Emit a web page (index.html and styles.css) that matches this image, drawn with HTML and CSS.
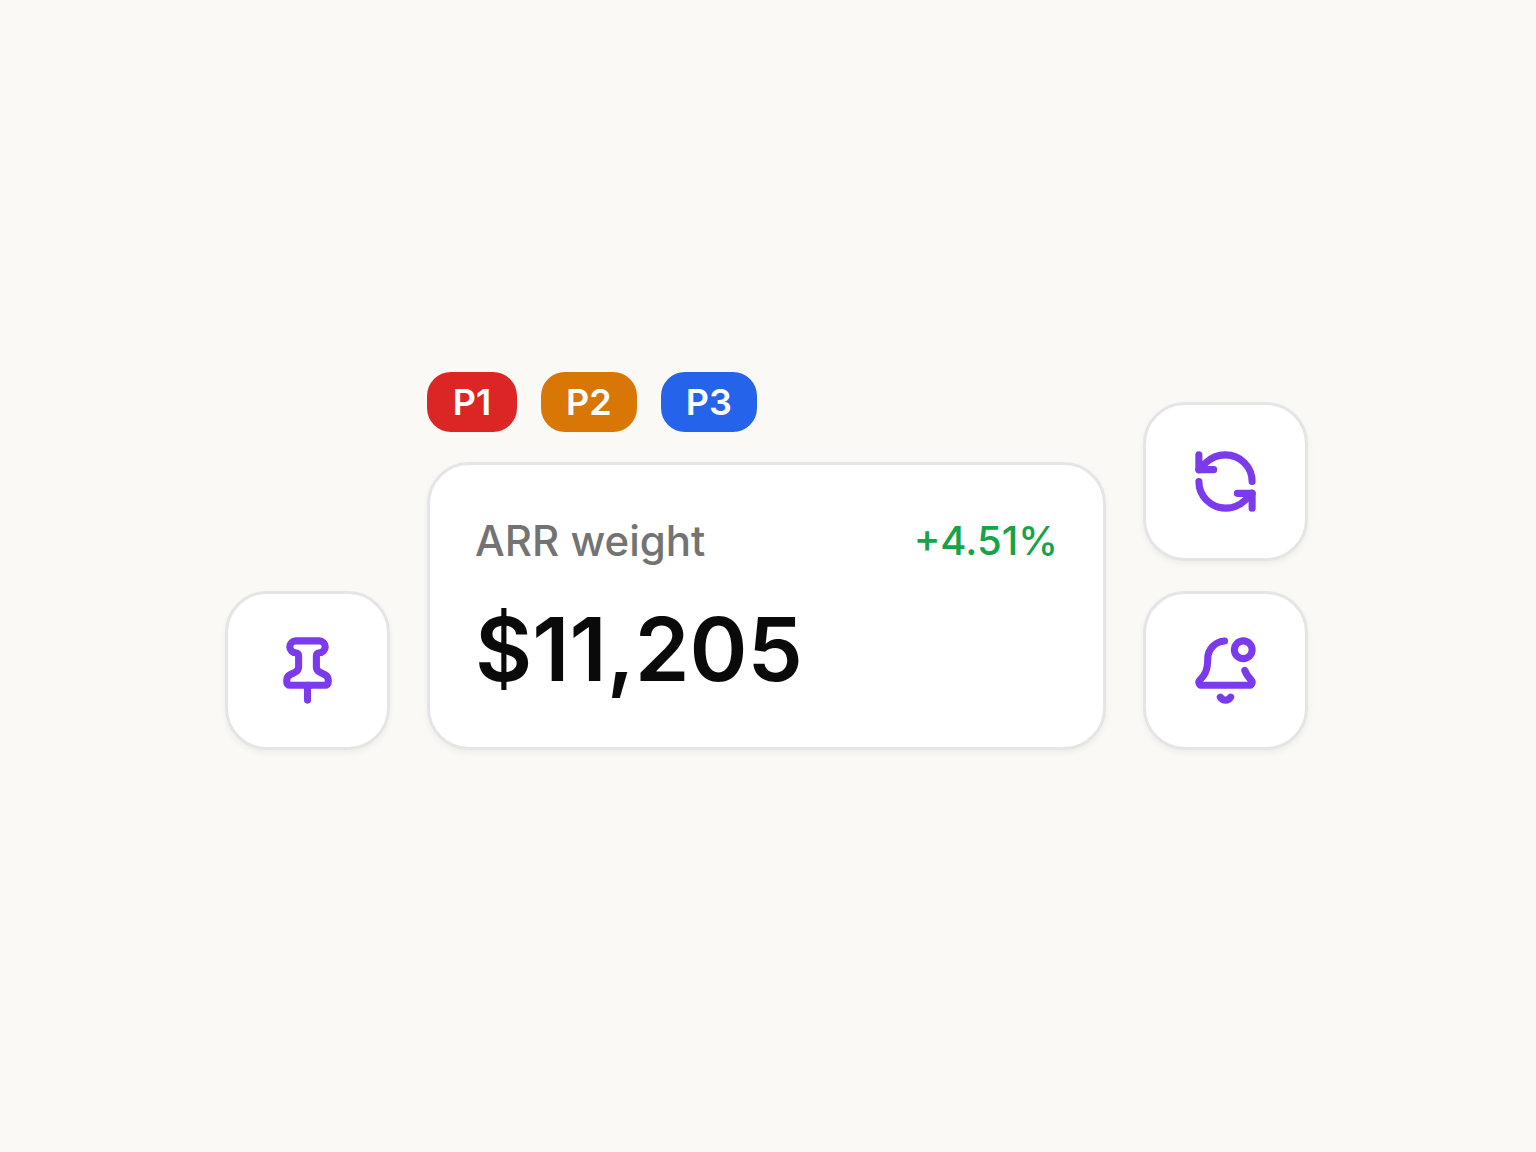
FILE: index.html
```html
<!DOCTYPE html>
<html lang="en">
<head>
<meta charset="utf-8">
<meta name="viewport" content="width=device-width, initial-scale=1">
<title>ARR weight</title>
<link rel="stylesheet" href="styles.css">
</head>
<body>
<main class="page">
  <div class="board">
    <button class="tile" type="button" aria-label="Pin">
      <svg class="icon" viewBox="0 0 24 24" aria-hidden="true">
        <path d="M12 17v5"/>
        <path d="M9 10.76a2 2 0 0 1-1.11 1.79l-1.78.9A2 2 0 0 0 5 15.24V16a1 1 0 0 0 1 1h12a1 1 0 0 0 1-1v-.76a2 2 0 0 0-1.11-1.79l-1.78-.9A2 2 0 0 1 15 10.76V7a1 1 0 0 1 1-1 2 2 0 0 0 0-4H8a2 2 0 0 0 0 4 1 1 0 0 1 1 1z"/>
      </svg>
    </button>
    <section class="center">
      <ul class="badges">
        <li class="badge badge-red">P1</li>
        <li class="badge badge-amber">P2</li>
        <li class="badge badge-blue">P3</li>
      </ul>
      <article class="card">
        <div class="card-head">
          <h1 class="label">ARR weight</h1>
          <span class="change">+4.51%</span>
        </div>
        <p class="value">$11,205</p>
      </article>
    </section>
    <div class="actions">
      <button class="tile" type="button" aria-label="Refresh">
        <svg class="icon" viewBox="0 0 24 24" aria-hidden="true">
          <path d="M21 12a9 9 0 0 0-9-9 9.75 9.75 0 0 0-6.74 2.74L3 8"/>
          <path d="M3 3v5h5"/>
          <path d="M3 12a9 9 0 0 0 9 9 9.75 9.75 0 0 0 6.74-2.74L21 16"/>
          <path d="M16 16h5v5"/>
        </svg>
      </button>
      <button class="tile" type="button" aria-label="Notifications">
        <svg class="icon" viewBox="0 0 24 24" aria-hidden="true">
          <path d="M10.268 21a2 2 0 0 0 3.464 0"/>
          <path d="M11.68 2.009A6 6 0 0 0 6 8c0 4.499-1.411 5.956-2.738 7.326A1 1 0 0 0 4 17h16a1 1 0 0 0 .74-1.673c-.824-.85-1.678-1.731-2.21-3.348"/>
          <circle cx="18" cy="5" r="3"/>
        </svg>
      </button>
    </div>
  </div>
</main>
</body>
</html>
```

FILE: styles.css
```css
* {
  box-sizing: border-box;
  margin: 0;
  padding: 0;
}

body {
  background: #faf9f5;
  font-family: Inter, "Liberation Sans", sans-serif;
  color: #0a0a0a;
}

.page {
  min-height: 100vh;
  display: flex;
  align-items: center;
  justify-content: center;
  padding: 24px 27px 54px 24px;
}

.board {
  width: 100%;
  max-width: 1083px;
  display: grid;
  grid-template-columns: auto 1fr auto;
  gap: 37px;
  align-items: end;
}

.tile,
.card {
  background: #fff;
  border: 3px solid #e5e5e5;
  border-radius: 42px;
  box-shadow: 0 3px 6px rgba(0, 0, 0, 0.05);
}

.tile {
  display: flex;
  align-items: center;
  justify-content: center;
  width: 165px;
  height: 159px;
  color: #7c3aed;
  cursor: pointer;
}

.icon {
  width: 71px;
  height: 71px;
  overflow: visible;
  fill: none;
  stroke: currentColor;
  stroke-width: 2.4;
  stroke-linecap: round;
  stroke-linejoin: round;
}

.actions,
.center {
  display: flex;
  flex-direction: column;
  gap: 30px;
}

.badges {
  display: flex;
  gap: 24px;
  list-style: none;
}

.badge {
  min-width: 90px;
  padding: 0 25px;
  border-radius: 24px;
  color: #fff;
  font-size: 36px;
  font-weight: 600;
  line-height: 60px;
  text-align: center;
}

.badge-red {
  background: #dc2626;
}

.badge-amber {
  background: #d97706;
}

.badge-blue {
  background: #2563eb;
}

.card {
  padding: 46px 45px 44px;
}

.card-head {
  display: flex;
  justify-content: space-between;
  gap: 24px;
  line-height: 60px;
}

.label {
  color: #737373;
  font-size: 42px;
  font-weight: 500;
}

.change {
  color: #16a34a;
  font-size: 40px;
  font-weight: 500;
}

.value {
  margin-top: 24px;
  font-size: 88px;
  font-weight: 600;
  line-height: 108px;
}
```
